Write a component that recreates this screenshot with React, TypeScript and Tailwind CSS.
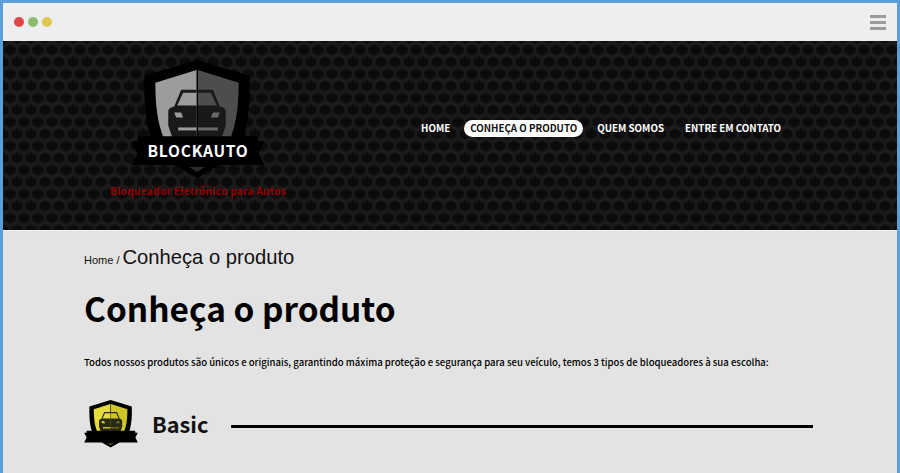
const SOURCE = "font-['Noto_Sans_CJK_SC','Noto_Sans',sans-serif]";

function HexBackground() {
  return (
    <svg className="absolute inset-0 h-full w-full" aria-hidden="true">
      <defs>
        <pattern id="hex" x="0" y="3" width="14" height="24" patternUnits="userSpaceOnUse">
          <rect width="14" height="24" fill="#1a1a1b" />
          <path d="M7 0.5 L12.6 3.4 L12.6 8.6 L7 11.5 L1.4 8.6 L1.4 3.4 Z" fill="#0b0b0c" />
          <path d="M0 12.5 L5.6 15.4 L5.6 20.6 L0 23.5 Z M14 12.5 L8.4 15.4 L8.4 20.6 L14 23.5 Z" fill="#0b0b0c" />
        </pattern>
      </defs>
      <rect width="100%" height="100%" fill="url(#hex)" />
    </svg>
  );
}

function Shield({ light, dark, body, bar, chevron }: { light: string; dark: string; body: string; bar: string; chevron: string }) {
  return (
    <svg viewBox="0 0 134 120" className="h-full w-full" aria-hidden="true">
      <path d="M66 0 L119 16 C120 50 117 72 105 100 L27 100 C15 72 12 50 13 16 Z" fill="#000" />
      <path d="M65.5 10 L24 23 C24 46 26 62 32 78 L65.5 78 Z" fill={light} />
      <path d="M67 10 L108 23 C108 46 106 62 100 78 L67 78 Z" fill={dark} />
      <path d="M65.5 30 L50 30 L43 47 C38 48 37 50 37 53 L37 66 L41 78 L65.5 78 Z" fill={body} />
      <path d="M67 30 L82 30 L89 47 C94 48 95 50 95 53 L95 66 L91 78 L67 78 Z" fill={body} />
      <path d="M65.5 33 L52 33 L46 46 L65.5 46 Z" fill={light} />
      <path d="M67 33 L80 33 L86 46 L67 46 Z" fill={dark} />
      <path d="M43 53 L50 53 L52 58 L45 58 Z" fill={light} />
      <path d="M89 53 L82 53 L80 58 L87 58 Z" fill={bar} />
      <rect x="47" y="68" width="18.5" height="3" fill={light} />
      <rect x="67" y="68" width="20" height="3" fill={bar} />
      <path d="M6 77 L127 77 L128 82 L134 82 L128 94 L134 106 L88 106 L66 119 L44 106 L0 106 L6 94 L0 82 L6 82 Z" fill="#000" />
      <path d="M58 108 L74 108 L66 113 Z" fill={chevron} />
    </svg>
  );
}

function NavItem({ label, active }: { label: string; active?: boolean }) {
  return (
    <a
      className={
        active
          ? "rounded-[9px] bg-white px-[6px] text-[9.75px] leading-[17px] font-bold text-[#111]"
          : "px-[7px] text-[9.75px] leading-[17px] font-bold text-white"
      }
    >
      {label}
    </a>
  );
}

export default function App() {
  return (
    <div className={`h-[473px] w-[900px] overflow-hidden bg-[#e3e3e3] ${SOURCE}`}>
      <div className="flex h-full flex-col border-x-[3px] border-t-[3px] border-[#5e9ed8]">
        <div className="flex h-[38px] shrink-0 items-center justify-between bg-[#eceeef] pr-[11px] pl-[11px]">
          <div className="flex gap-[4px]">
            <span className="h-[10px] w-[10px] rounded-full bg-[#df4548]" />
            <span className="h-[10px] w-[10px] rounded-full bg-[#8dbb6c]" />
            <span className="h-[10px] w-[10px] rounded-full bg-[#e0c751]" />
          </div>
          <div className="flex w-[16px] flex-col gap-[3px]">
            <span className="h-[3px] bg-[#9b9b9b]" />
            <span className="h-[3px] bg-[#9b9b9b]" />
            <span className="h-[3px] bg-[#9b9b9b]" />
          </div>
        </div>

        <header className="relative flex h-[190px] shrink-0 items-start border-b border-[#f4f4f4]">
          <HexBackground />
          <div className="relative ml-[107px] flex w-[176px] flex-col items-center pt-[19px]">
            <div className="relative h-[119px] w-[134px]">
              <Shield light="#9c9c9c" dark="#4d4d4d" body="#191919" bar="#6a6a6a" chevron="#2a2a2a" />
              <span className="absolute top-[78px] left-0 w-full text-center text-[15.5px] leading-[24px] font-bold tracking-[0.8px] text-white">
                BLOCKAUTO
              </span>
            </div>
            <p className="mt-[3px] text-[10.2px] leading-[18px] font-bold tracking-[0.25px] whitespace-nowrap text-[#960000]">
              Bloqueador Eletrônico para Autos
            </p>
          </div>
          <nav className="relative mt-[79px] ml-[128px] flex items-center gap-[7px] whitespace-nowrap">
            <NavItem label="HOME" />
            <NavItem label="CONHEÇA O PRODUTO" active />
            <NavItem label="QUEM SOMOS" />
            <NavItem label="ENTRE EM CONTATO" />
          </nav>
        </header>

        <main className="flex-1 pl-[81px]">
          <div className="mt-[13px] flex items-baseline font-['Liberation_Sans',sans-serif] text-[#111]">
            <span className="text-[11px]">Home /&nbsp;</span>
            <span className="text-[20.2px] leading-[26px]">Conheça o produto</span>
          </div>
          <h1 className="mt-[14px] text-[33.4px] leading-[48px] font-bold text-black">Conheça o produto</h1>
          <p className="mt-[21px] text-[9.57px] leading-[18px] font-medium whitespace-nowrap text-black">
            Todos nossos produtos são únicos e originais, garantindo máxima proteção e segurança para seu veículo, temos 3 tipos de bloqueadores à sua escolha:
          </p>
          <section className="mt-[29px] flex items-center">
            <div className="h-[48px] w-[54px]">
              <Shield light="#e6dc3a" dark="#cfc62c" body="#2a2a12" bar="#7a7520" chevron="#5a5518" />
            </div>
            <h2 className="ml-[14px] text-[21.7px] leading-[30px] font-bold text-[#111]">Basic</h2>
            <div className="mt-[4px] ml-[23px] h-[3px] w-[582px] bg-black" />
          </section>
        </main>
      </div>
    </div>
  );
}
